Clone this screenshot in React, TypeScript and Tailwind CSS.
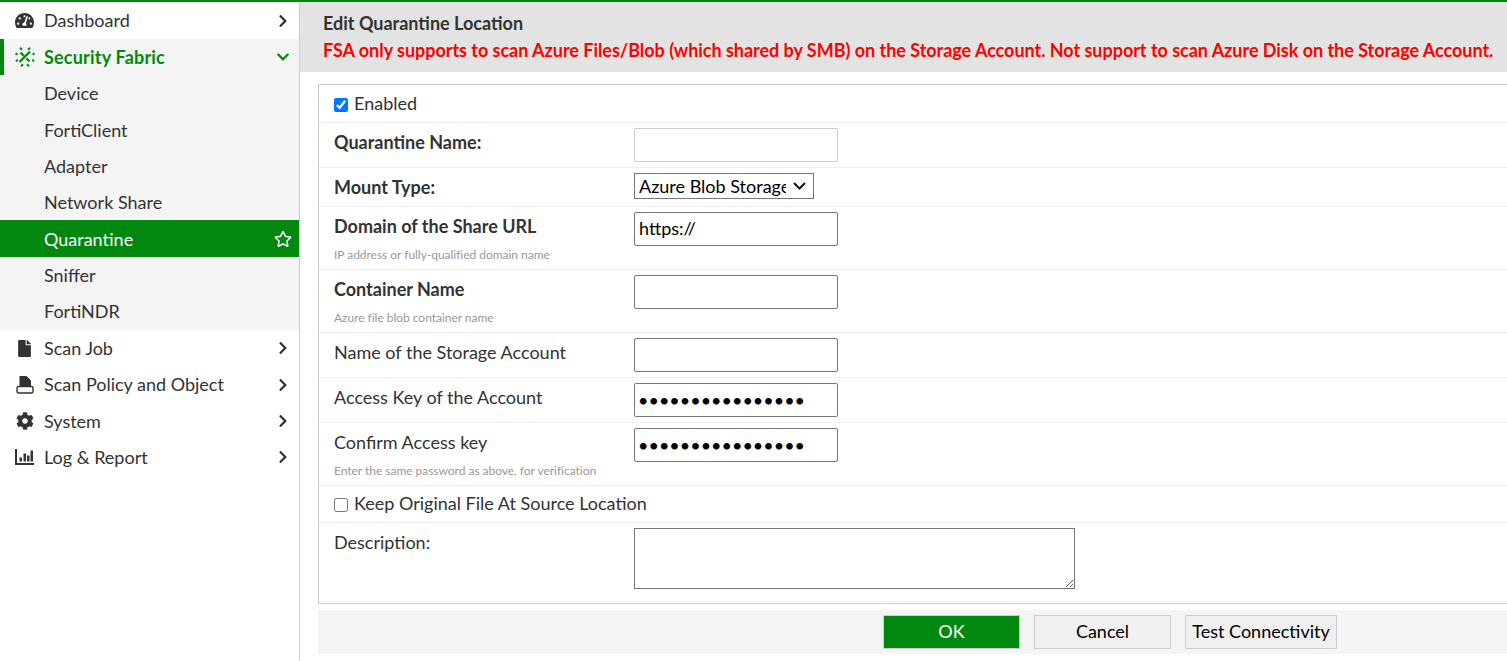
import type { ReactNode } from "react";
import { FaChevronDown, FaChevronRight, FaCog, FaFile, FaRegStar, FaTachometerAlt } from "react-icons/fa";

const FabricIcon = () => (
  <svg viewBox="0 0 20 20" className="h-[20px] w-[20px]" fill="none" stroke="#03880f">
    <path d="M15 4.500L4.500 15M5.500 5.500l3.300 3.300M11.200 11.200l3.300 3.300" strokeWidth="2.300" />
    <path d="M5 0.800l2 2M15 0.800l-2 2M0.500 6.500l2 1M19.500 6.500l-2 1M0.800 14l2-1M19.200 14l-2-1M6 19.200l2-2M14 19.200l-2-2" strokeWidth="2" />
  </svg>
);

const PolicyIcon = () => (
  <svg viewBox="0 0 18 18" className="h-[18px] w-[18px]" fill="#333">
    <path d="M3.500 0h7l4.500 4.500v6h-11.500z" />
    <path d="M2.500 10.500h13a1.500 1.500 0 0 1 1.500 1.500v3.500a1.500 1.500 0 0 1-1.500 1.500h-13a1.500 1.500 0 0 1-1.500-1.500v-3.500a1.500 1.500 0 0 1 1.500-1.500z" fill="none" stroke="#333" strokeWidth="1.400" />
  </svg>
);

const ReportIcon = () => (
  <svg viewBox="0 0 19 16" className="h-[16px] w-[19px]" fill="#333">
    <path d="M0 0h2v14h17v2H0z" />
    <path d="M4.500 8.500h2.500v4H4.500zM8.500 4.500h2.500v8H8.500zM12 6.500h2.500v6H12zM15.500 1.500h2.500v11h-2.500z" />
  </svg>
);

function NavItem({ icon, label, h = "h-[36.4px]" }: { icon: ReactNode; label: string; h?: string }) {
  return (
    <div className={`flex items-center ${h}`}>
      <span className="flex w-[44px] shrink-0 justify-center pl-[5px]">{icon}</span>
      <span>{label}</span>
      <FaChevronRight className="ml-auto mr-[9px] text-[14px] text-[#333]" />
    </div>
  );
}

function SubItem({ label, active, tall }: { label: string; active?: boolean; tall?: boolean }) {
  const h = tall ? "h-[37px]" : "h-[36px]";
  if (active) {
    return (
      <div className={`flex items-center bg-[#03880f] pl-[44px] pr-[7px] pt-[1px] text-white ${h}`}>
        <span>{label}</span>
        <FaRegStar className="ml-auto text-[18px]" />
      </div>
    );
  }
  return <div className={`flex items-center pl-[44px] ${h}`}>{label}</div>;
}

function Sidebar() {
  return (
    <aside className="w-[300px] shrink-0 border-r border-[#cccccc]">
      <NavItem h="h-[37px]" icon={<FaTachometerAlt className="text-[19px] text-[#333]" />} label="Dashboard" />
      <div className="bg-[#f4f4f4]">
        <div className="flex h-[36px] items-center border-l-[4px] border-[#03880f] font-bold text-[#03880f]">
          <span className="flex w-[40px] shrink-0 justify-center pl-[2px]">
            <FabricIcon />
          </span>
          <span className="tracking-[0.2px]">Security Fabric</span>
          <FaChevronDown className="ml-auto mr-[9px] text-[14px]" />
        </div>
        <SubItem label="Device" tall />
        <SubItem label="FortiClient" />
        <SubItem label="Adapter" />
        <SubItem label="Network Share" />
        <SubItem label="Quarantine" active tall />
        <SubItem label="Sniffer" />
        <SubItem label="FortiNDR" tall />
      </div>
      <NavItem icon={<FaFile className="text-[17px] text-[#333]" />} label="Scan Job" />
      <NavItem icon={<PolicyIcon />} label="Scan Policy and Object" />
      <NavItem h="h-[36.4px] pt-[1px]" icon={<FaCog className="text-[18px] text-[#333]" />} label="System" />
      <NavItem icon={<ReportIcon />} label="Log & Report" />
    </aside>
  );
}

function Row({ h, label, hint, bold, children }: { h: string; label: string; hint?: string; bold?: boolean; children?: ReactNode }) {
  return (
    <div className={`flex border-b border-[#eeeeee] pl-[15px] ${h}`}>
      <div className="w-[300px] shrink-0 pt-[4px]">
        <div className={bold ? "font-bold leading-[30px]" : "leading-[30px]"}>{label}</div>
        {hint && <div className="mt-[7px] text-[12px] leading-[14px] tracking-[-0.03px] text-[#999999]">{hint}</div>}
      </div>
      <div className="pt-[5px]">{children}</div>
    </div>
  );
}

function TextBox({ value, light }: { value?: string; light?: boolean }) {
  return (
    <input
      type="text"
      defaultValue={value}
      className={
        light
          ? "h-[34px] w-[204px] rounded-[2px] border border-[#cccccc] bg-white px-[4px] pb-[2px] text-black"
          : "h-[34px] w-[204px] rounded-[2px] border border-[#767676] bg-white px-[4px] pb-[2px] text-black"
      }
    />
  );
}

function PasswordBox() {
  return (
    <input
      type="password"
      defaultValue="abcdefghijklmnop"
      className="h-[34px] w-[204px] rounded-[2px] border border-[#767676] bg-white px-[3px] text-black"
    />
  );
}

function CheckRow({ h, label, checked }: { h: string; label: string; checked?: boolean }) {
  return (
    <label className={`flex items-center gap-[6px] border-b border-[#eeeeee] pl-[15px] ${h}`}>
      <input type="checkbox" defaultChecked={checked} className="mt-[2px] h-[14px] w-[14px]" />
      <span className="-mt-[1px]">{label}</span>
    </label>
  );
}

export default function App() {
  return (
    <div className="flex h-[661px] overflow-hidden border-t-2 border-[#03880f] bg-white font-['Lato',sans-serif] text-[18px] text-[#333]">
      <Sidebar />
      <main className="min-w-0 flex-1">
        <div className="h-[70px] bg-[#e3e3e3] pl-[23px] pt-[8px] font-bold leading-[26px]">
          <div className="mb-[1px]">Edit Quarantine Location</div>
          <div className="whitespace-nowrap tracking-[-0.03px] text-[#ff0000]">
            FSA only supports to scan Azure Files/Blob (which shared by SMB) on the Storage Account. Not support to scan Azure Disk on the Storage Account.
          </div>
        </div>
        <div className="ml-[18px] mt-[12px]">
          <div className="border border-r-0 border-[#cccccc] pb-[1px]">
            <CheckRow h="h-[38px]" label="Enabled" checked />
            <Row h="h-[45px]" label="Quarantine Name:" bold>
              <TextBox light />
            </Row>
            <Row h="h-[39px]" label="Mount Type:" bold>
              <div className="relative w-[180px]">
                <select
                  defaultValue="Azure Blob Storage"
                  className="block h-[26px] w-[180px] appearance-none border border-[#767676] bg-white pb-[1px] pl-[4px] pr-[27px] leading-[20px] text-black"
                >
                  <option>Azure Blob Storage</option>
                  <option>Azure File Share</option>
                </select>
                <svg viewBox="0 0 13 8" className="pointer-events-none absolute right-[8px] top-[9px] h-[8px] w-[13px]" fill="none" stroke="#111" strokeWidth="2">
                  <path d="M1 1l5.500 5.500L12 1" />
                </svg>
              </div>
            </Row>
            <Row h="h-[63px]" label="Domain of the Share URL" hint="IP address or fully-qualified domain name" bold>
              <TextBox value="https://" />
            </Row>
            <Row h="h-[63px]" label="Container Name" hint="Azure file blob container name" bold>
              <TextBox />
            </Row>
            <Row h="h-[45px]" label="Name of the Storage Account">
              <TextBox />
            </Row>
            <Row h="h-[45px]" label="Access Key of the Account">
              <PasswordBox />
            </Row>
            <Row h="h-[63px]" label="Confirm Access key" hint="Enter the same password as above, for verification">
              <PasswordBox />
            </Row>
            <CheckRow h="h-[37px]" label="Keep Original File At Source Location" />
            <Row h="h-[79px]" label="Description:">
              <textarea className="h-[61px] w-[441px] border border-[#767676] bg-white align-top" />
            </Row>
          </div>
          <div className="mt-[6px] flex h-[44px] items-center gap-[14px] bg-[#f4f4f4] pl-[565px]">
            <button className="h-[34px] w-[137px] border border-[#cccccc] bg-[#03880f] pb-[2px] text-white">OK</button>
            <button className="h-[34px] w-[137px] border border-[#cccccc] bg-[#f0f0f0] pb-[2px] text-black">Cancel</button>
            <button className="h-[34px] w-[152px] border border-[#cccccc] bg-[#f0f0f0] pb-[2px] text-black">Test Connectivity</button>
          </div>
        </div>
      </main>
    </div>
  );
}
